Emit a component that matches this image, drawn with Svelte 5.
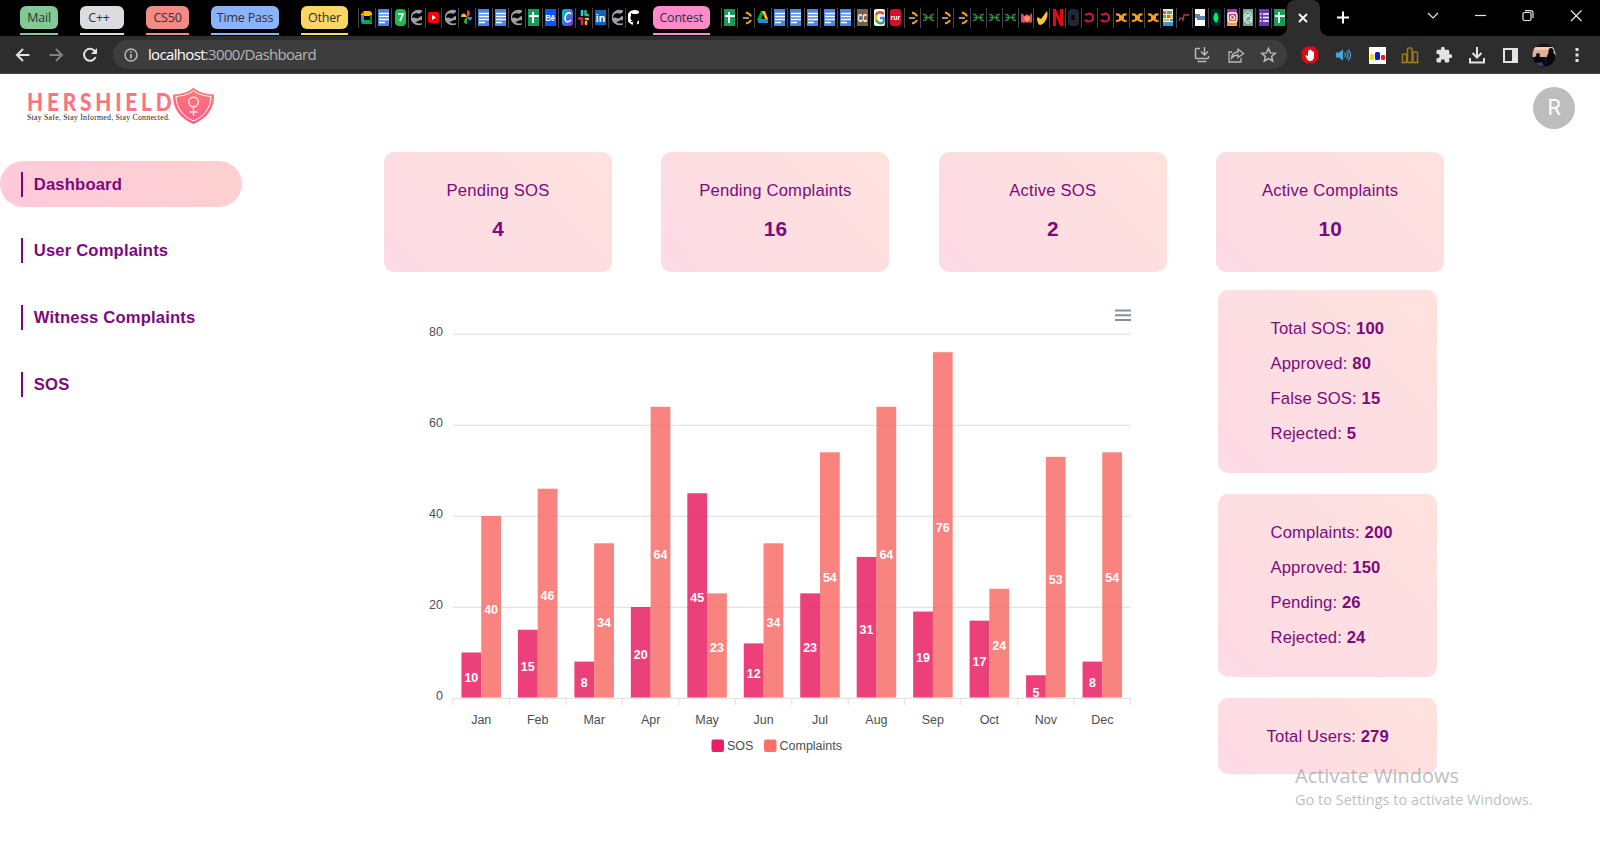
<script>
  const groups = [
    { name: 'Mail', color: '#81c995', width: 38, gap: 22 },
    { name: 'C++', color: '#dadce0', width: 44, gap: 22, shift: 6 },
    { name: 'CS50', color: '#f28b82', width: 43, gap: 22 },
    { name: 'Time Pass', color: '#8ab4f8', width: 68, gap: 22 },
    { name: 'Other', color: '#fdd663', width: 47, gap: 10 }
  ];
  const otherTabs = ['meet', 'docs', 'seven', 'globe', 'youtube', 'globe', 'photos', 'docs', 'docs', 'globe', 'sheets', 'behance', 'canva', 'slack', 'linkedin', 'globe', 'github'];
  const contestTabs = ['sheets', 'leet', 'drive', 'docs', 'docs', 'docs', 'docs', 'docs', 'chef', 'google', 'naukri', 'leet', 'geeks', 'leet', 'leet'];
  const restTabs = ['geeks', 'geeks', 'geeks', 'monkey', 'check', 'netflix', 'lock', 'curl', 'curl', 'xing', 'xing', 'xing', 'palette', 'rhythm', 'paper', 'mongo', 'insta', 'gpt', 'forms', 'sheets'];

  const menu = ['Dashboard', 'User Complaints', 'Witness Complaints', 'SOS'];
  const stats = [
    ['Pending SOS', 4],
    ['Pending Complaints', 16],
    ['Active SOS', 2],
    ['Active Complaints', 10]
  ];
  const summaries = [
    [['Total SOS', 100], ['Approved', 80], ['False SOS', 15], ['Rejected', 5]],
    [['Complaints', 200], ['Approved', 150], ['Pending', 26], ['Rejected', 24]]
  ];

  const months = ['Jan', 'Feb', 'Mar', 'Apr', 'May', 'Jun', 'Jul', 'Aug', 'Sep', 'Oct', 'Nov', 'Dec'];
  const sos = [10, 15, 8, 20, 45, 12, 23, 31, 19, 17, 5, 8];
  const complaints = [40, 46, 34, 64, 23, 34, 54, 64, 76, 24, 53, 54];
  const left = 43;
  const base = 408;
  const step = 56.46;
  const unit = 4.55;
  const barW = 19.76;
  // Labels sit mid-bar; on very short bars they rest on the baseline.
  const labelY = (v) => base - (v * unit) / 2 + (v < 6 ? 10.8 : 6.8);
</script>

{#snippet favicon(kind)}
  <svg class="favicon" viewBox="0 0 11 17" width="11" height="17">
    {#if kind === 'docs'}
      <rect width="11" height="17" fill="#4a86e8" />
      <path d="M1 4.5h10M1 7.5h10M1 10.5h10M1 13.5h6" stroke="#fff" stroke-width="1.3" />
    {:else if kind === 'sheets'}
      <rect width="11" height="17" fill="#149c58" />
      <path d="M5 3v11M1 7h10" stroke="#fff" stroke-width="2" />
    {:else if kind === 'meet'}
      <path d="M0 5 3 2h6l2 2v3H3v6H0z" fill="#fbbc04" />
      <path d="M0 5l3-3v3z" fill="#ea4335" />
      <path d="M0 6h3v7H0z" fill="#2684fc" />
      <path d="M3 11h8v4H1l-1-2h3z" fill="#00ac47" />
      <path d="M9 6h2v7H9z" fill="#00832d" />
    {:else if kind === 'seven'}
      <rect width="11" height="17" rx="4" fill="#1db954" />
      <path d="M3 5h5l-3 7" stroke="#fff" stroke-width="1.7" fill="none" />
    {:else if kind === 'globe'}
      <circle cx="7.5" cy="8.5" r="7.8" fill="#9aa0a6" />
      <path d="M2 5.500q3-2 5-1t3-1l1-.5v4q-2 0-3 1.500t-3 .5-4 0q0-2 1-3.500zM4 13q2 0 3-1t4-1v3q-3 1.500-7-1z" fill="#000" />
    {:else if kind === 'youtube'}
      <rect y="3" width="11" height="11" rx="2" fill="#f00" />
      <path d="M4 6v5l4-2.500z" fill="#fff" />
    {:else if kind === 'photos'}
      <path d="M6 8V1c4 1 4 5 0 7z" fill="#ea4335" />
      <path d="M6 8H0c0-4 4-5 6 0z" fill="#fbbc04" />
      <path d="M6 8h5c0 5-4 4-5 0z" fill="#4285f4" />
      <path d="M6 8v7c-4 0-4-4 0-7z" fill="#34a853" />
    {:else if kind === 'behance'}
      <rect width="11" height="17" fill="#0757fe" />
      <text x="0.500" y="12" class="glyph" font-size="8.500" textLength="9.500" lengthAdjust="spacingAndGlyphs" fill="#fff">Bē</text>
    {:else if kind === 'canva'}
      <defs><linearGradient id="canva" x2="1" y2="1"><stop stop-color="#00c4cc" /><stop offset="1" stop-color="#7d2ae8" /></linearGradient></defs>
      <rect width="11" height="17" rx="3" fill="url(#canva)" />
      <path d="M9 5C7 2 3 5 3 9s3 5 6 2" fill="none" stroke="#fff" stroke-width="1.500" />
    {:else if kind === 'slack'}
      <g stroke-width="2.600" stroke-linecap="round" fill="none">
        <path d="M4 2v4" stroke="#36c5f0" /><path d="M9 6h1M7.500 2v4" stroke="#2eb67d" />
        <path d="M1 9.500h3M4 12v3" stroke="#e01e5a" /><path d="M8 10h3M8 13v2" stroke="#ecb22e" />
      </g>
    {:else if kind === 'linkedin'}
      <rect y="1" width="11" height="15" fill="#0a66c2" />
      <text x="0.800" y="13" class="glyph" font-size="10.500" fill="#fff">in</text>
    {:else if kind === 'github'}
      <circle cx="6.500" cy="8.500" r="7.500" fill="#fff" />
      <path d="M3 4l2 1h4l2-1v7c-2 2-2 2-2 5H5v-3H3v-1h2C2 11 2 8 3 7z" fill="#000" />
    {:else if kind === 'leet'}
      <path d="M5 3.500q4 1 5 4M5 14.500q4-1 5-3.500" fill="none" stroke="#ffa116" stroke-width="2" />
      <path d="M2 9h6" stroke="#c8c8c8" stroke-width="1.500" />
    {:else if kind === 'drive'}
      <path d="M4 2h3L3 14l-3-3z" fill="#00ac47" />
      <path d="M5 2h3l3 8H8z" fill="#ffba00" />
      <path d="M2 10h9v4H1z" fill="#2684fc" />
    {:else if kind === 'chef'}
      <rect width="11" height="17" fill="#75604f" />
      <text x="0.700" y="12.500" class="glyph" font-size="11" textLength="9.600" lengthAdjust="spacingAndGlyphs" fill="#fff">CC</text>
    {:else if kind === 'google'}
      <rect width="11" height="17" rx="2" fill="#fff" />
      <g fill="none" stroke-width="2.500">
        <path d="M10 5C7 2 3 3 2 6" stroke="#ea4335" /><path d="M2 6v5" stroke="#fbbc04" />
        <path d="M2 11c2 4 6 4 8 2" stroke="#34a853" /><path d="M6 9h4v4" stroke="#4285f4" />
      </g>
    {:else if kind === 'naukri'}
      <rect width="11" height="17" rx="3" fill="#d5102f" />
      <text x="0.500" y="11" class="glyph" font-size="7" fill="#fff">rur</text>
    {:else if kind === 'geeks'}
      <path d="M0 5.500c5-1 5 6 0 6M11 5.500c-5-1-5 6 0 6M1 8.500h9" fill="none" stroke="#2f8d46" stroke-width="1.500" />
    {:else if kind === 'monkey'}
      <path d="M0 4l4 3 2-2 2 2 3-3v9l-2 1-3-2-3 2-3-1z" fill="#e8408f" />
      <path d="M2.500 9l3.500-3 3.500 3L6 14z" fill="#ff9a45" />
    {:else if kind === 'check'}
      <path d="M0 8l4 2 6-8c2 6-3 14-7 14-2 0-3-4-3-8z" fill="#fcc62d" />
    {:else if kind === 'netflix'}
      <path d="M0 0h3l4 10V0h3v17H7L3 7v10H0z" fill="#e50914" />
    {:else if kind === 'lock'}
      <rect width="11" height="17" rx="4" fill="#232733" />
      <path d="M5 6v5" stroke="#05070b" stroke-width="3" />
    {:else if kind === 'curl'}
      <path d="M1 5q2 1.500 4-.5 4 .5 4 4t-4 4q-3 0-4-2" fill="none" stroke="#c9163c" stroke-width="2.100" />
    {:else if kind === 'xing'}
      <path d="M0 5.500q4-.5 4.500 3T0 12M10.500 5.500q-4-.5-4.500 3t4.500 3.500M3 8.700h5" fill="none" stroke="#ffa116" stroke-width="2.200" />
    {:else if kind === 'palette'}
      <rect width="10" height="17" fill="#f4e8d2" />
      <path d="M0 2h3v3H0zM4 6h3v3H4z" fill="#ee5050" /><path d="M4 2h5v3H4zM0 6h3v3H0z" fill="#55ad63" />
      <path d="M7 6h3v3H7zM0 10h6v2H0z" fill="#f1bf39" /><path d="M0 13h10v4H0zM7 10h3v2H7z" fill="#3998d5" />
    {:else if kind === 'rhythm'}
      <path d="M0 12c1-5 3-3 4-1l1-5c2-1 3 2 5-1" fill="none" stroke="#bb2d6c" stroke-width="1.400" />
    {:else if kind === 'paper'}
      <rect width="10" height="17" fill="#fff" />
      <path d="M0 6h5M0 8h10M2 10h8" stroke="#345a99" stroke-width="1.300" />
    {:else if kind === 'mongo'}
      <rect width="10" height="17" rx="3" fill="#001e2b" />
      <path d="M5 3c4 5 2 9 0 11-3-3-4-6 0-11z" fill="#00ed64" />
    {:else if kind === 'insta'}
      <defs><linearGradient id="insta" y2="1" x2="0"><stop stop-color="#833ab4" /><stop offset=".5" stop-color="#e5405f" /><stop offset="1" stop-color="#fcaf45" /></linearGradient></defs>
      <rect width="10" height="17" fill="url(#insta)" />
      <rect x="1" y="4" width="9" height="9" rx="2" fill="none" stroke="#fff" stroke-width="1.300" /><circle cx="5.500" cy="8.500" r="2" fill="none" stroke="#fff" stroke-width="1.200" />
    {:else if kind === 'gpt'}
      <rect width="10" height="17" fill="#74a594" />
      <g fill="none" stroke="#e4f1ec" stroke-width=".9"><ellipse cx="5" cy="8.500" rx="4" ry="6" /><path d="M2 5l6 3v6M8 4L3 7v6M1 10l6-4M4 13l5-3" /></g>
    {:else if kind === 'forms'}
      <rect width="10" height="17" fill="#673ab7" />
      <path d="M1 5h1.500M4 5h6M1 8.500h1.500M4 8.500h6M1 12h1.500M4 12h6" stroke="#fff" stroke-width="1.500" />
    {/if}
  </svg>
{/snippet}

{#snippet tabs(list, width)}
  {#each list as kind}
    <div class="tab" style:width="{width}px">{@render favicon(kind)}</div>
  {/each}
{/snippet}

<div class="window">
  <div class="strip">
    {#each groups as g}
      <div class="group" style:width="{g.width}px" style:margin-right="{g.gap}px" style:--c={g.color}><span style:padding-right="{g.shift ?? 0}px">{g.name}</span></div>
    {/each}
    <div class="tabs first">{@render tabs(otherTabs, 16.7)}</div>
    <div class="group contest" style:width="57px" style:--c="#ff8bcb"><span>Contest</span></div>
    <div class="tabs">{@render tabs(contestTabs, 16.63)}{@render tabs(restTabs, 15.85)}</div>
    <div class="active-tab">
      <svg width="12" height="12" viewBox="0 0 12 12" stroke="#fff" stroke-width="1.800"><path d="M2 2l8 8M10 2l-8 8" /></svg>
    </div>
    <svg class="controls" width="279" height="35" viewBox="0 0 279 35" fill="none" stroke="#e8e8e8" stroke-width="1.200">
      <path d="M23 11.500v12M17 17.500h12" stroke="#fff" stroke-width="2" />
      <path d="M108 13l5 5 5-5" />
      <path d="M155 15.500h11" />
      <rect x="203" y="12.500" width="8" height="8" rx="1.500" /><path d="M205 10.600h5.500q2.500 0 2.500 2.500v5" />
      <path d="M251 10.500l10.500 10.500M261.500 10.500L251 21" />
    </svg>
  </div>

  <div class="toolbar">
    <svg class="nav" width="113" height="36" viewBox="0 0 113 36" fill="none" stroke-width="2">
      <path d="M29.500 18H17M23 12l-6 6 6 6" stroke="#e3e3e3" />
      <path d="M49.500 18H62M56 12l6 6-6 6" stroke="#818181" />
      <path d="M95 14.500a6 6 0 1 0 .6 5.500" stroke="#e3e3e3" />
      <path d="M97 11v6h-6z" fill="#e3e3e3" />
    </svg>
    <div class="address">
      <svg width="14" height="14" viewBox="0 0 14 14" fill="none" stroke="#b7b9bc" stroke-width="1.500"><circle cx="7" cy="7" r="6" /><path d="M7 6v4.500M7 3.300v1.500" stroke-width="1.700" /></svg>
      <span class="url"><b>localhost</b>:3000/Dashboard</span>
      <svg class="actions" width="88" height="20" viewBox="0 0 88 20" fill="none" stroke="#b9b9b9" stroke-width="1.500">
        <path d="M7 3.500H3.500q-1 0-1 1v8q0 1 1 1h11q1 0 1-1V11M5.500 15.500v1h7v-1M11.500 2v7M8 6.500l3.500 3.500L15 6.500" />
        <path d="M39 7h-3v10h12v-4M38.500 13c.5-4 3-6 6.500-6V4l5.500 4.500L45 12.500V10c-3 0-5 1-6.500 3z" stroke-width="1.300" />
        <path d="M75.500 3.500l1.900 4.400 4.800.4-3.600 3.100 1.100 4.700-4.200-2.500-4.200 2.500 1.100-4.700-3.600-3.100 4.800-.4z" />
      </svg>
    </div>
    <div class="extensions">
      <svg width="18" height="18" viewBox="0 0 18 18"><path d="M5 .5h8L17.500 5v8L13 17.500H5L.5 13V5z" fill="#d90c14" /><path d="M5 9l2 1V5q1-1.500 1.500 0V4q1-1.500 1.500 0v1q1-1.500 1.500 0v1q1.500-1 1.500 0v5c0 5-6 5-7 2L4.500 10z" fill="#fff" /></svg>
      <svg width="18" height="18" viewBox="0 0 18 18" fill="none" stroke="#4ba3e2" stroke-width="1.200"><path d="M2.500 7.200h2.500l3.500-2.700v9L5 10.800H2.500z" fill="#4ba3e2" /><path d="M10.500 6.800q2 2.200 0 4.400M12.500 5q3 4 0 8M14.300 3.500q4.500 5.500 0 11" /></svg>
      <svg width="18" height="18" viewBox="0 0 18 18"><path d="M1 1h17v17H1z" fill="#fff" /><rect x="2" y="8" width="4" height="6" rx="1" fill="#f4df00" /><rect x="7" y="6" width="5" height="8" rx="1.500" fill="#1414d8" /><rect x="13" y="9" width="4" height="5" rx="1" fill="#e42028" /></svg>
      <svg width="18" height="18" viewBox="0 0 18 18" fill="none" stroke="#9b7b12" stroke-width="1.500"><rect x="1.500" y="8" width="4" height="8.500" rx="1" /><rect x="6.500" y="2" width="4.500" height="14.500" rx="1" /><rect x="12" y="6" width="4.500" height="10.500" rx="1" /><path d="M0 16.500h18" /></svg>
      <svg width="18" height="18" viewBox="0 0 24 24" fill="#e3e3e3"><path d="M20.500 11H19V7c0-1.100-.9-2-2-2h-4V3.500a2.500 2.500 0 0 0-5 0V5H4c-1.100 0-2 .9-2 2v3.800h1.500a2.700 2.700 0 0 1 0 5.400H2V20c0 1.100.9 2 2 2h3.800v-1.500a2.700 2.700 0 0 1 5.400 0V22H17c1.100 0 2-.9 2-2v-4h1.500a2.500 2.500 0 0 0 0-5z" /></svg>
      <svg width="18" height="18" viewBox="0 0 18 18" fill="none" stroke="#e3e3e3" stroke-width="2"><path d="M9 1v10M4.500 7L9 11.500 13.500 7M2 12v4.500h14V12" /></svg>
      <svg width="18" height="18" viewBox="0 0 18 18"><path d="M2 2h15v15H2z" fill="#e3e3e3" /><path d="M4 4h7v11H4z" fill="#2d2d2d" /></svg>
      <svg class="person" width="24" height="24" viewBox="0 0 24 24"><defs><clipPath id="face"><circle cx="12" cy="12" r="11.500" /></clipPath></defs><g clip-path="url(#face)"><path d="M0 0h24v24H0z" fill="#17141c" /><path d="M0 4h24v10H0z" fill="#e0ae96" /><path d="M0 4h24v3H0z" fill="#f0cbb4" /><path d="M15 24V13l1.500-3q-.5-5 2.500-5t2.500 5l2.500 3v11zM2 24v-9l4-4 3 4 3-1 2 10z" fill="#08070f" /><circle cx="6" cy="12" r="2" fill="#151321" /><path d="M4 20l6-1 2 4H5z" fill="#303d66" /></g></svg>
      <svg width="18" height="18" viewBox="0 0 18 18" fill="#e3e3e3"><path d="M7.500 2h3v3h-3zM7.500 7.500h3v3h-3zM7.500 13h3v3h-3z" /></svg>
    </div>
  </div>

  <main>
    <header>
      <svg class="logo" width="190" height="40" viewBox="0 0 190 40">
        <defs><linearGradient id="brand" x1="0" y1="0" x2="0" y2="1"><stop stop-color="#ff7b75" /><stop offset="1" stop-color="#fb5c8a" /></linearGradient></defs>
        <text x="0" y="25" class="word" transform="scale(.85 1)" textLength="170">HERSHIELD</text>
        <text x="0" y="33.500" class="motto" textLength="143" lengthAdjust="spacing">Stay Safe, Stay Informed, Stay Connected.</text>
        <path d="M166.500 1.500c4 4 10 6.500 20.500 7 .5 14-7 24-20.500 29.500C153 32.500 145.500 22.500 146 8.500c10.500-.5 16.500-3 20.500-7z" fill="url(#brand)" />
        <path d="M166.500 4.500c4 3.500 9.500 5.200 17.500 6-.5 11.500-6.500 19.500-17.500 24.500C155.500 30 149.500 22 149 10.500c8-.8 13.500-2.500 17.500-6z" fill="none" stroke="#fff" stroke-width="1" />
        <g fill="none" stroke="#ffe3e6" stroke-width="1.500"><circle cx="166.500" cy="16" r="4.800" /><path d="M166.500 21v9M162.500 26h8" /></g>
      </svg>
      <div class="user">R</div>
    </header>

    <div class="body">
      <nav>
        {#each menu as item, i}
          <div class="item" class:selected={i === 0}><span>{item}</span></div>
        {/each}
      </nav>
      <section class="content">
        <div class="stats">
          {#each stats as [label, value]}
            <div class="card stat"><span>{label}</span><b>{value}</b></div>
          {/each}
        </div>
        <div class="lower">
          <svg class="chart" width="760" height="490" viewBox="0 0 760 490">
            <g stroke="#e4e4e4" stroke-width="1.200">
              {#each [0, 20, 40, 60, 80] as v}
                <line x1={left} x2={left + step * 12} y1={base + 0.3 - v * unit} y2={base + 0.3 - v * unit} />
              {/each}
              {#each Array(13) as _, i}
                <line x1={left + i * step} x2={left + i * step} y1={base} y2={base + 7} />
              {/each}
            </g>
            {#each [0, 20, 40, 60, 80] as v}
              <text class="axis" x="33" y={base + 1.500 - v * unit} text-anchor="end">{v}</text>
            {/each}
            {#each months as month, i}
              {@const mid = left + (i + 0.5) * step}
              <rect x={mid - barW} y={base - sos[i] * unit} width={barW} height={sos[i] * unit - 0.5} fill="#e91e63" opacity=".85" />
              <rect x={mid} y={base - complaints[i] * unit} width={barW} height={complaints[i] * unit - 0.5} fill="#f86d67" opacity=".85" />
              <text class="value" x={mid - barW / 2} y={labelY(sos[i])} text-anchor="middle">{sos[i]}</text>
              <text class="value" x={mid + barW / 2} y={labelY(complaints[i])} text-anchor="middle">{complaints[i]}</text>
              <text class="axis" x={mid} y="434" text-anchor="middle">{month}</text>
            {/each}
            <path d="M705 20.500h16M705 25.300h16M705 30h16" stroke="#7f90a0" stroke-width="2" />
            <rect x="301.500" y="449.500" width="12.500" height="12.500" rx="2" fill="#e91e63" />
            <text class="axis" x="317" y="460">SOS</text>
            <rect x="354" y="449.500" width="12.500" height="12.500" rx="2" fill="#fb6f68" />
            <text class="axis" x="369.500" y="460">Complaints</text>
          </svg>
          <aside>
            {#each summaries as rows}
              <div class="card summary">
                {#each rows as [label, value]}
                  <div>{label}: <b>{value}</b></div>
                {/each}
              </div>
            {/each}
            <div class="card total"><div>Total Users: <b>279</b></div></div>
          </aside>
        </div>
      </section>
    </div>
    <div class="watermark"><p>Activate Windows</p><small>Go to Settings to activate Windows.</small></div>
  </main>
</div>

<style>
  :global(body) { margin: 0; overflow: hidden; }
  .window { width: 1600px; height: 845px; display: flex; flex-direction: column; overflow: hidden; background: #fff; font-family: 'Liberation Sans', Arial, sans-serif; }
  .window :global(svg) { display: block; flex: none; }
  .strip { height: 36px; flex: none; display: flex; background: #000; padding-left: 20px; font-family: 'Open Sans', 'Noto Sans', sans-serif; }
  .group { box-sizing: border-box; flex: none; height: 29px; margin-top: 6px; border-bottom: 2px solid var(--c); }
  .group span { display: flex; align-items: center; justify-content: center; height: 23px; border-radius: 6px; background: var(--c); color: #303236; font-size: 12.500px; letter-spacing: -0.2px; white-space: nowrap; }
  .tabs { display: flex; flex: none; padding-top: 8px; }
  .tabs.first { margin-right: 11px; }
  .group.contest { margin-right: 11px; }
  .tab { box-sizing: border-box; height: 20px; padding: 1px 0 0 2.300px; border-left: 1px solid #464646; }
  .glyph { font-family: 'Liberation Sans', Arial, sans-serif; font-weight: 700; }
  .active-tab { position: relative; width: 33px; height: 36px; flex: none; display: flex; align-items: center; justify-content: center; border-radius: 8px 8px 0 0; background: #2d2d2d; }
  .active-tab::before, .active-tab::after { content: ''; position: absolute; bottom: 0; width: 8px; height: 8px; }
  .active-tab::before { left: -8px; background: radial-gradient(circle at 0 0, transparent 7.500px, #2d2d2d 8px); }
  .active-tab::after { right: -8px; background: radial-gradient(circle at 100% 0, transparent 7.500px, #2d2d2d 8px); }
  .controls { flex: none; }
  .toolbar { height: 37px; flex: none; display: flex; align-items: center; background: #2d2d2d; border-bottom: 1px solid #484848; }
  .address { width: 1174px; height: 29px; box-sizing: border-box; flex: none; display: flex; align-items: center; padding: 0 6px 0 11px; border-radius: 15px; background: #3d3d3d; }
  .url { margin-left: 10px; flex: 1; padding-bottom: 1.500px; color: #b5b5b5; font: 15px 'Open Sans', 'Noto Sans', sans-serif; letter-spacing: -0.67px; }
  .url b { color: #fff; font-weight: 400; }
  .extensions { flex: 1; display: flex; align-items: center; justify-content: space-between; padding: 0 14px; }
  .person { margin: 0 -3px; }
  main { position: relative; flex: 1; display: flex; flex-direction: column; }
  header { height: 78px; box-sizing: border-box; flex: none; display: flex; justify-content: space-between; padding: 12px 25px 0 27px; }
  .word { font: 900 24.500px Lato, sans-serif; fill: #fb757f; }
  .motto { font: 7.800px 'Liberation Serif', serif; fill: #222; }
  .user { width: 42px; height: 42px; margin-top: .5px; border-radius: 50%; background: #bdbdbd; color: #fff; display: flex; align-items: center; justify-content: center; font-family: Roboto, sans-serif; font-size: 21.500px; }
  .body { flex: 1; display: flex; }
  nav { width: 384px; flex: none; padding-top: 9.400px; }
  .item { box-sizing: border-box; width: 242px; height: 45.700px; margin-bottom: 21px; padding-left: 21px; display: flex; align-items: center; border-radius: 23px; color: #7d0a7d; font-size: 16.670px; font-weight: 700; letter-spacing: 0.14px; }
  .item span { padding-left: 10.800px; border-left: 2.500px solid #800080; line-height: 25px; }
  .selected { background: linear-gradient(45deg, #fec9dc, #fdd1cf); }
  .stats { display: flex; gap: 49.400px; }
  .card { box-sizing: border-box; border-radius: 10px; background: linear-gradient(45deg, #fddbe8, #fddde3 30%, #fee0e0 75%, #ffe2dd); color: #7d0a7d; font-size: 16.670px; letter-spacing: 0.12px; }
  .stat { width: 228px; height: 120px; display: flex; flex-direction: column; align-items: center; padding-top: 28.500px; }
  .stat span { line-height: 20px; letter-spacing: 0.18px; }
  .stat b { margin-top: 16.500px; font-size: 20.800px; line-height: 24px; }
  .lower { display: flex; padding-left: 26px; }
  .chart { margin-top: 18px; width: 760px; }
  .axis { font-size: 12.500px; fill: #4a5052; }
  .value { font-size: 12.500px; font-weight: 700; fill: #fff; }
  aside { display: flex; flex-direction: column; gap: 21px; margin: 18px 0 0 48.200px; }
  .summary { width: 219px; height: 183px; padding: 20.800px 0 0 52.300px; }
  .summary div { line-height: 35.200px; }
  .total { width: 219px; height: 76px; padding-top: 1px; display: flex; align-items: center; justify-content: center; }
  .watermark { position: absolute; left: 1295px; top: 687.500px; font-family: 'Open Sans', 'Noto Sans', sans-serif; color: rgba(145, 145, 145, 0.6); white-space: nowrap; }
  .watermark p { margin: 0; font-size: 20px; line-height: 28px; }
  .watermark small { display: block; font-size: 14.500px; line-height: 20px; }
</style>
